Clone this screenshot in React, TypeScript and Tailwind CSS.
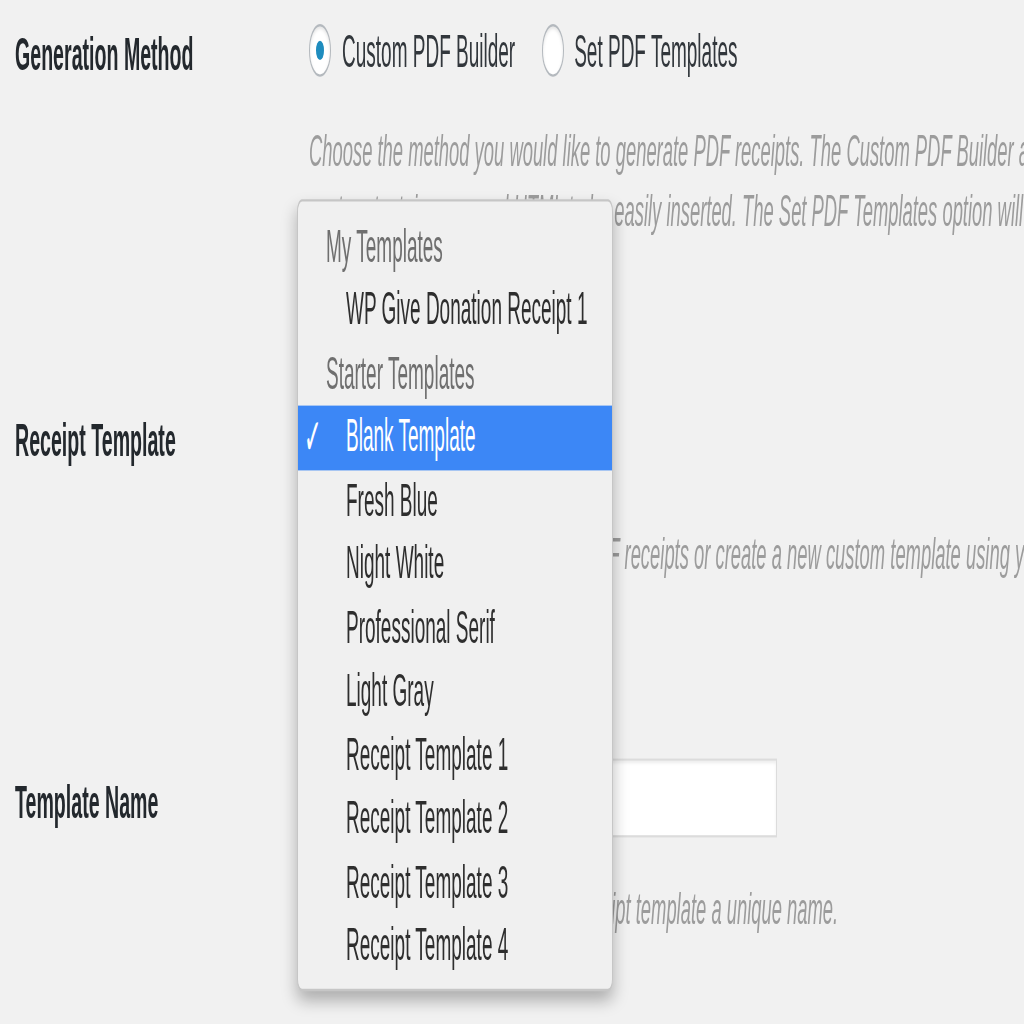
import React from "react";

const starterTemplates = [
  "Blank Template",
  "Fresh Blue",
  "Night White",
  "Professional Serif",
  "Light Gray",
  "Receipt Template 1",
  "Receipt Template 2",
  "Receipt Template 3",
  "Receipt Template 4",
];

function Radio({ checked }: { checked?: boolean }) {
  return (
    <span className="mb-[3px] flex h-[22px] w-[22px] shrink-0 items-center justify-center rounded-full border border-[#b4b9be] bg-white shadow-[inset_0_1px_2px_rgba(0,0,0,0.1)]">
      {checked && <span className="h-[8px] w-[8px] rounded-full bg-[#1e8cbe]" />}
    </span>
  );
}

function TemplateMenu() {
  return (
    <div className="absolute left-[297px] top-[83.3px] w-[316px] h-[330px] rounded-[5px] border border-[#c6c6c6] bg-[#f0f0f0] pt-[5.5px] shadow-[0_4px_10px_rgba(0,0,0,0.28)]">
      <div className="flex h-[26.5px] items-center pl-[28px] text-[#6f6f6f]">My Templates</div>
      <div className="flex h-[26.5px] items-center pl-[48px] text-[#2e2e2e]">WP Give Donation Receipt 1</div>
      <div className="flex h-[26.5px] items-center pl-[28px] text-[#6f6f6f]">Starter Templates</div>
      {starterTemplates.map((name, i) => (
        <div
          key={name}
          className={
            i === 0
              ? "relative flex h-[26.5px] items-center bg-[#3c87f6] pl-[48px] text-white"
              : "flex h-[26.5px] items-center pl-[48px] text-[#2e2e2e]"
          }
        >
          {i === 0 && (
            <span className="absolute left-[6px] font-['DejaVu_Sans',sans-serif] text-[21px] font-bold">✓</span>
          )}
          {name}
        </div>
      ))}
    </div>
  );
}

export default function App() {
  return (
    <div className="h-[1024px] w-[1024px] overflow-hidden bg-[#f1f1f1]">
      <div className="relative h-[426.67px] w-[1024px] origin-top scale-y-[2.4] overflow-hidden pl-[15px] font-['Liberation_Sans',Arial,sans-serif] text-[19px] text-[#32373c]">
        {/* Generation method */}
        <div className="flex h-[45px] items-center whitespace-nowrap">
          <div className="w-[294px] shrink-0 text-[19.6px] font-bold text-[#23282d]">Generation Method</div>
          <label className="flex items-center gap-[11px]">
            <Radio checked />
            Custom PDF Builder
          </label>
          <label className="ml-[27px] flex items-center gap-[10px]">
            <Radio />
            Set PDF Templates
          </label>
        </div>
        <div className="ml-[294px] mt-[5px] whitespace-nowrap text-[18.4px] italic leading-[25px] text-[#9c9c9c]">
          <p>Choose the method you would like to generate PDF receipts. The Custom PDF Builder allows</p>
          <p>custom text, images and HTML to be easily inserted. The Set PDF Templates option will</p>
        </div>

        {/* Receipt template */}
        <div className="mt-[69.3px] flex whitespace-nowrap">
          <div className="flex h-[28px] w-[294px] shrink-0 items-center text-[19.6px] font-bold text-[#23282d]">Receipt Template</div>
          <div className="shrink-0">
            <div className="h-[28px] w-[290px] border border-[#ddd] bg-white" />
            <p className="mt-[21.2px] text-[18.4px] italic leading-[25px] text-[#9c9c9c]">
              Choose a starter template for the PDF receipts or create a new custom template using your own design.
            </p>
          </div>
        </div>

        {/* Template name */}
        <div className="mt-[72.3px] flex whitespace-nowrap">
          <div className="flex h-[33.4px] w-[294px] shrink-0 items-center pt-[4px] text-[19.6px] font-bold text-[#23282d]">Template Name</div>
          <div className="shrink-0">
            <div className="h-[33.4px] w-[468px] border border-[#dcdcdc] bg-white shadow-[inset_0_1px_2px_rgba(0,0,0,0.07)]" />
            <p className="mt-[16.6px] text-[18.4px] italic leading-[25px] text-[#9c9c9c]">
              Now give your new custom PDF receipt template a unique name.
            </p>
          </div>
        </div>

        <TemplateMenu />
      </div>
    </div>
  );
}
